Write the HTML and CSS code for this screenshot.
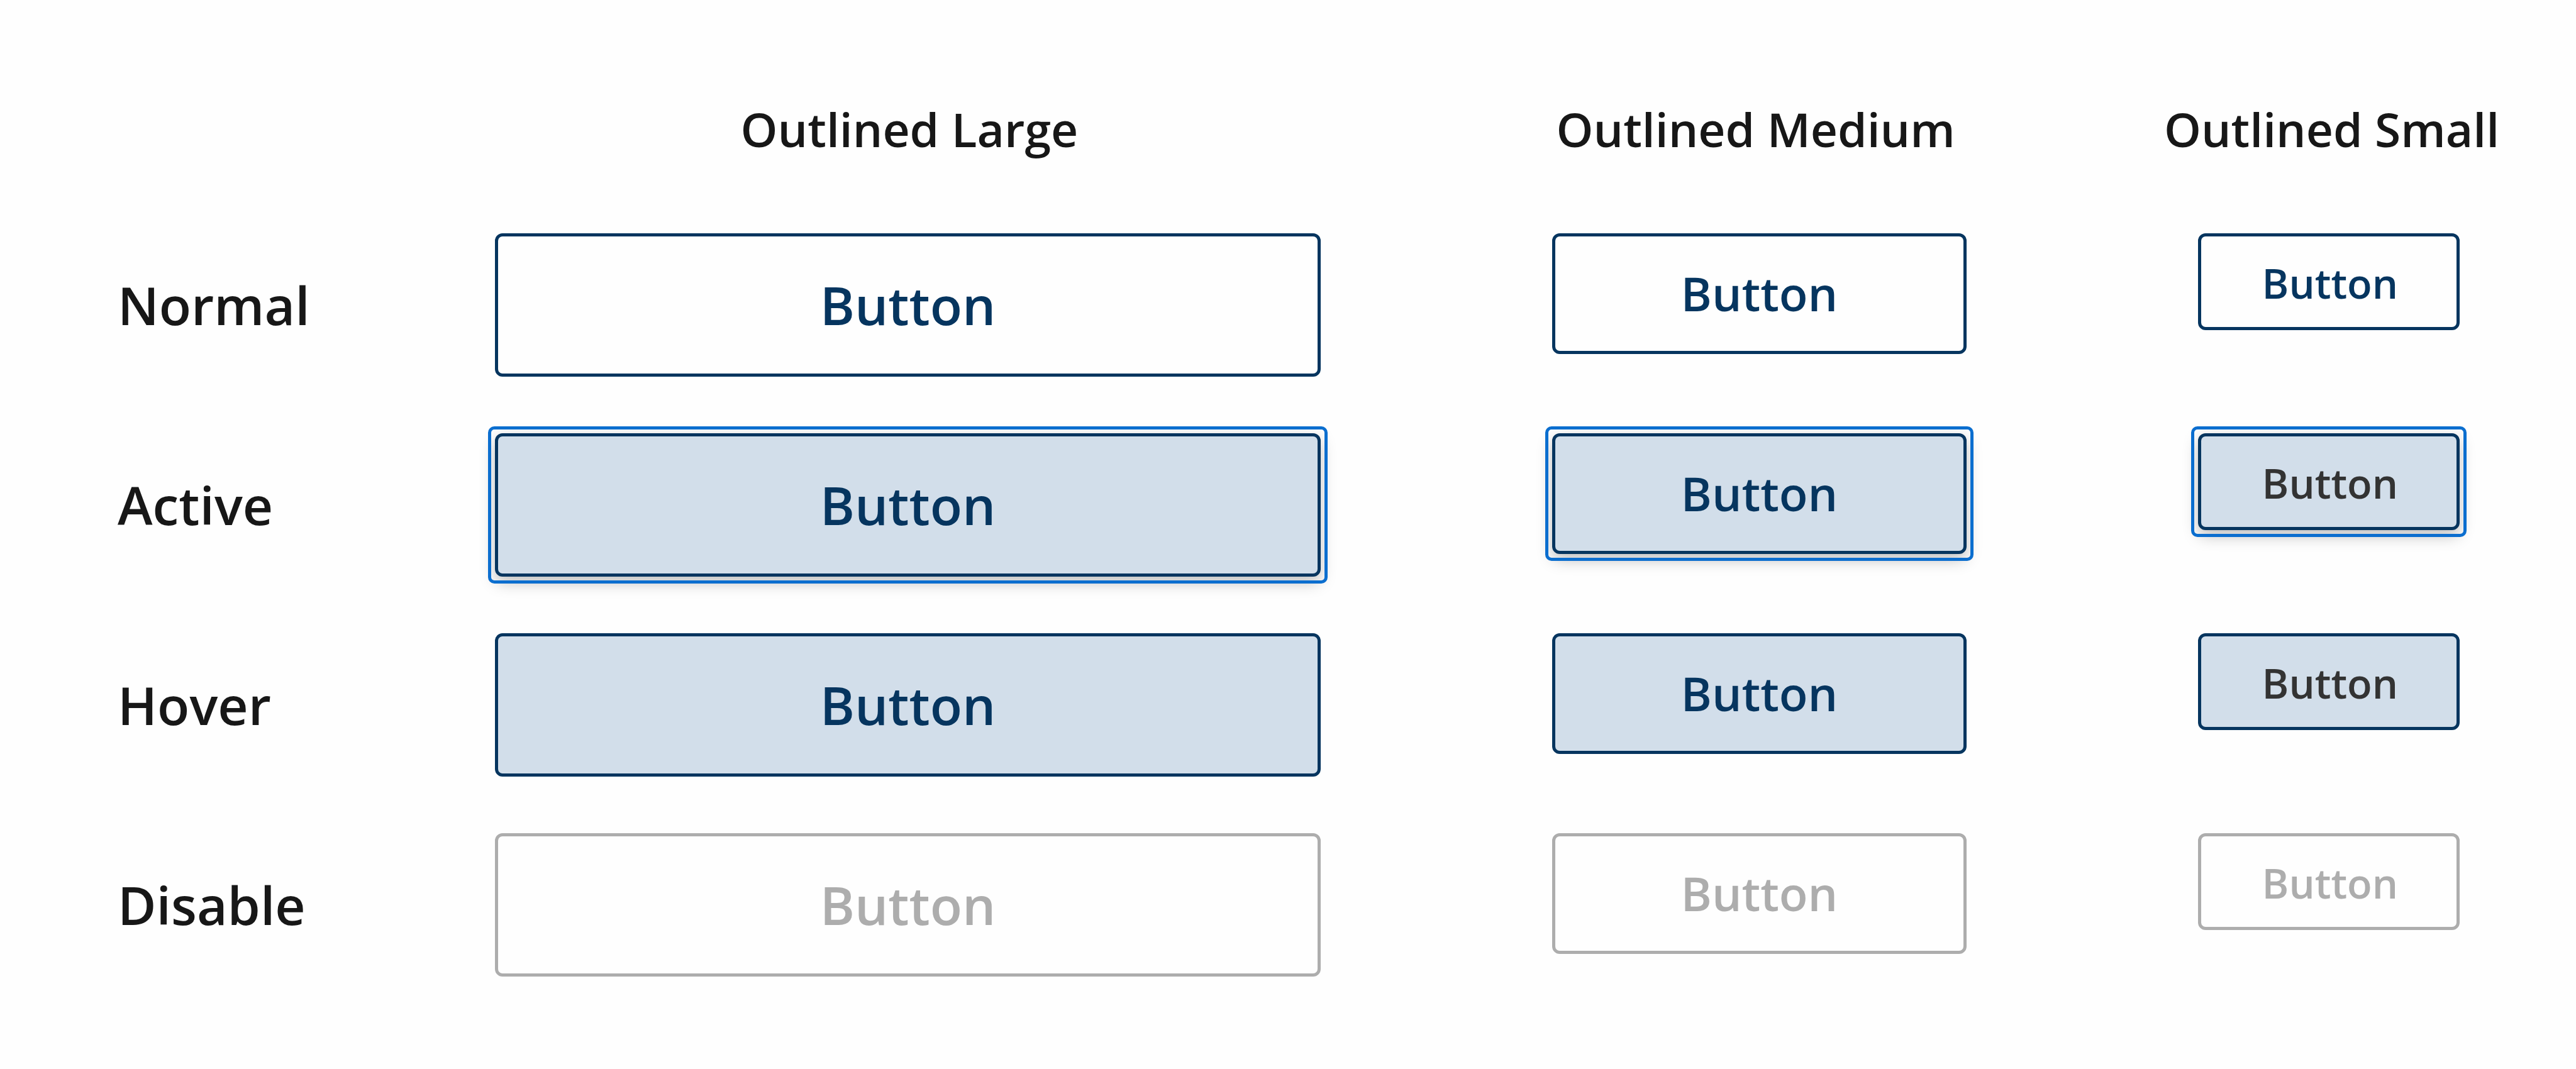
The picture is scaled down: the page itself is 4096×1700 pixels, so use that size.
FILE: index.html
```html
<!DOCTYPE html>
<html lang="en">
<head>
  <meta charset="utf-8">
  <meta name="viewport" content="width=device-width, initial-scale=1">
  <title>Outlined buttons</title>
  <link rel="stylesheet" href="styles.css">
</head>
<body>
  <main class="board">
    <div class="row row-head">
      <span class="label"></span>
      <div class="cells">
        <h2 class="heading">Outlined Large</h2>
        <h2 class="heading">Outlined Medium</h2>
        <h2 class="heading">Outlined Small</h2>
      </div>
    </div>
    <section class="row">
      <h3 class="label">Normal</h3>
      <div class="cells">
        <button type="button" class="btn btn-large">Button</button>
        <button type="button" class="btn btn-medium">Button</button>
        <button type="button" class="btn btn-small">Button</button>
      </div>
    </section>
    <section class="row">
      <h3 class="label">Active</h3>
      <div class="cells">
        <button type="button" class="btn btn-large is-active">Button</button>
        <button type="button" class="btn btn-medium is-active">Button</button>
        <button type="button" class="btn btn-small is-active">Button</button>
      </div>
    </section>
    <section class="row">
      <h3 class="label">Hover</h3>
      <div class="cells">
        <button type="button" class="btn btn-large is-hover">Button</button>
        <button type="button" class="btn btn-medium is-hover">Button</button>
        <button type="button" class="btn btn-small is-hover">Button</button>
      </div>
    </section>
    <section class="row">
      <h3 class="label">Disable</h3>
      <div class="cells">
        <button type="button" class="btn btn-large" disabled>Button</button>
        <button type="button" class="btn btn-medium" disabled>Button</button>
        <button type="button" class="btn btn-small" disabled>Button</button>
      </div>
    </section>
  </main>
</body>
</html>
```
FILE: styles.css
```css
:root {
  --navy: #06355f;
  --focus: #0b6ecf;
  --tint: #d2deea;
  --disabled: #adadad;
  --ink: #171717;
}

* {
  box-sizing: border-box;
}

body {
  margin: 0;
  background: #fefefe;
  color: var(--ink);
  font-family: "Open Sans", sans-serif;
  font-weight: 600;
}

.board {
  display: flex;
  flex-direction: column;
  gap: 90px;
  padding: 154px 185px 0 187px;
}

.row {
  display: flex;
  align-items: center;
}

.label {
  flex: 600 1 0;
  margin: 0;
  font-size: 84px;
  font-weight: 600;
  line-height: 114px;
}

.cells {
  flex: 3124 1 0;
  display: grid;
  grid-template-columns: 1312fr 658fr 416fr;
  column-gap: 368px;
  align-items: start;
}

/* The headings run wider than the small buttons, so their row reaches further right */
.row-head {
  margin-right: -22px;
  margin-bottom: 25px;
}

.row-head .cells {
  grid-template-columns: 1311fr 645fr 451fr;
}

.heading {
  justify-self: center;
  width: max-content;
  min-width: 0;
  margin: 0 -80px;
  font-size: 75px;
  font-weight: 600;
  line-height: 102px;
  white-space: nowrap;
}

.btn {
  position: relative;
  width: 100%;
  border: 5px solid var(--navy);
  border-radius: 12px;
  background: transparent;
  color: var(--navy);
  font-family: inherit;
  font-weight: 600;
  text-align: center;
}

.btn-large {
  padding: 52px 20px;
  font-size: 84px;
  line-height: 114px;
}

.btn-medium {
  padding: 39px 20px 41px;
  font-size: 75px;
  line-height: 102px;
}

.btn-small {
  padding: 29px 18px 25px 22px;
  font-size: 65px;
  line-height: 90px;
}

.is-active,
.is-hover {
  background: var(--tint);
}

.btn-small.is-active,
.btn-small.is-hover {
  color: #333333;
}

.is-active {
  box-shadow: 0 9px 24px rgba(0, 0, 0, 0.25);
}

/* Focus ring around the active button */
.is-active::after {
  content: "";
  position: absolute;
  inset: -16px;
  border: 5px solid var(--focus);
  border-radius: 10px;
}

.btn:disabled {
  border-color: var(--disabled);
  color: var(--disabled);
}
```
